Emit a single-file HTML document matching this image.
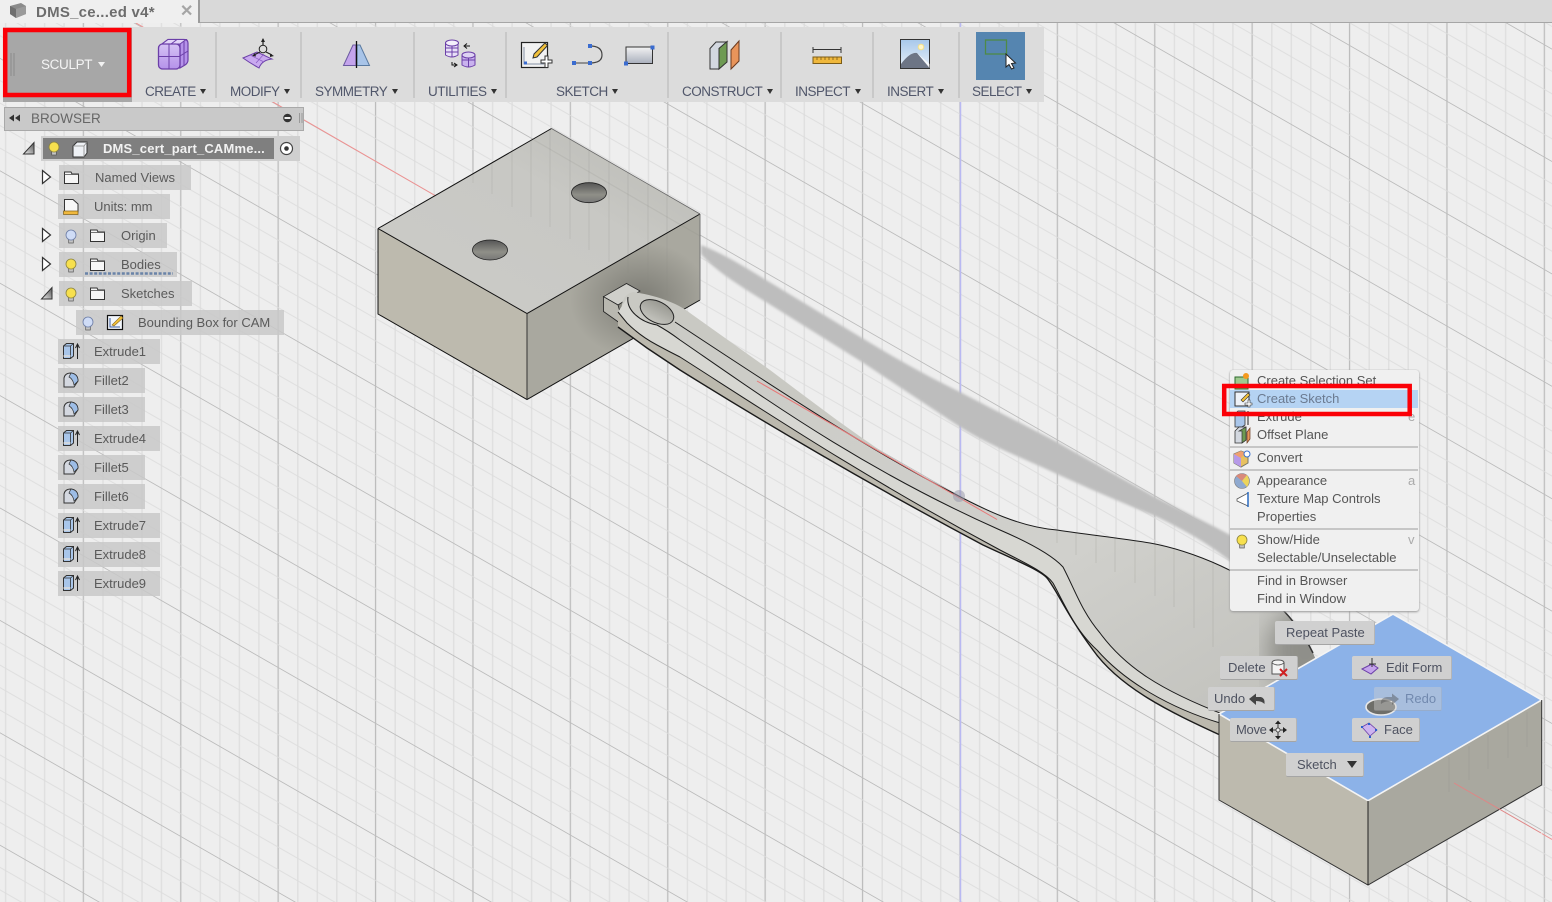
<!DOCTYPE html>
<html lang="en"><head><meta charset="utf-8"><title>DMS_cert_part</title>
<style>
html,body{margin:0;padding:0;width:1552px;height:902px;overflow:hidden;background:#eee;font-family:"Liberation Sans",Arial,sans-serif}
.a{position:absolute}
.t{position:absolute;white-space:nowrap;font-size:13px}
.lbl{position:absolute;top:84px;height:16px;line-height:16px;font-size:13.5px;color:#50566a;white-space:nowrap;letter-spacing:-.5px}
.lbl i{display:inline-block;width:0;height:0;border-left:3.5px solid transparent;border-right:3.5px solid transparent;border-top:5px solid #333;margin-left:4.5px;vertical-align:2px}
.sep{position:absolute;top:32px;width:2px;height:66px;background:#c8c8c8}
.row{position:absolute;height:25px;line-height:25px;background:rgba(200,200,200,.85);font-size:13px;color:#5a5a5a;white-space:nowrap}
.row span{position:absolute;top:0}
.mi{position:absolute;left:1257px;height:18px;line-height:20px;font-size:13px;color:#555;white-space:nowrap}
.ms{position:absolute;left:1230px;width:188px;height:2px;background:#c6c6c6}
.sc{position:absolute;left:1408px;height:18px;line-height:20px;font-size:13px;color:#aaa}
.b{position:absolute;height:23px;line-height:24px;background:#d0d0d0;border-bottom:1.5px solid #a5a5a5;border-right:1px solid #b5b5b5;border-radius:2px;font-size:13px;color:#4e5260;white-space:nowrap;box-sizing:content-box}
.b span{position:absolute;top:0}
</style></head><body>

<svg class="a" style="left:0;top:0" width="1552" height="902" viewBox="0 0 1552 902">
<defs>
<pattern id="gv" patternUnits="userSpaceOnUse" x="83.3" y="0" width="97.4" height="50">
<rect x="19" width="1.4" height="50" fill="#dfdfdf"/><rect x="38.5" width="1.4" height="50" fill="#dfdfdf"/><rect x="58" width="1.4" height="50" fill="#dfdfdf"/><rect x="77.5" width="1.4" height="50" fill="#dfdfdf"/><rect x="-.6" width="1.3" height="50" fill="#bdbdbd"/><rect x="96.8" width="1.3" height="50" fill="#bdbdbd"/>
</pattern>
<pattern id="gd" patternUnits="userSpaceOnUse" x="0" y="57.9" width="60" height="112.4" patternTransform="skewY(29.83)">
<rect y="22.2" width="60" height="1" fill="#dcdcdc"/><rect y="44.7" width="60" height="1" fill="#dcdcdc"/><rect y="67.2" width="60" height="1" fill="#dcdcdc"/><rect y="89.7" width="60" height="1" fill="#dcdcdc"/><rect y="0" width="60" height="1" fill="#bcbcbc"/>
</pattern>
<linearGradient id="top1" x1="0" y1="1" x2="1" y2="0"><stop offset="0" stop-color="#cbcbc8"/><stop offset=".6" stop-color="#c8c8c4"/><stop offset="1" stop-color="#b8b8b2"/></linearGradient>
<radialGradient id="dk" cx=".5" cy=".5" r=".5"><stop offset="0" stop-color="#55554f" stop-opacity=".55"/><stop offset="1" stop-color="#55554f" stop-opacity="0"/></radialGradient>
<linearGradient id="hole" x1="0" y1="0" x2="0" y2="1"><stop offset="0" stop-color="#555"/><stop offset=".6" stop-color="#8f8f88"/><stop offset="1" stop-color="#777"/></linearGradient>
<linearGradient id="hole2" x1="0" y1="0" x2="0" y2="1"><stop offset="0" stop-color="#999992"/><stop offset="1" stop-color="#c4c4be"/></linearGradient>
<linearGradient id="bowl" x1="0" y1="0" x2="1" y2="1"><stop offset="0" stop-color="#cbcbc6"/><stop offset=".6" stop-color="#d0d0cc"/><stop offset="1" stop-color="#c0c0bb"/></linearGradient>
<filter id="bl"><feGaussianBlur stdDeviation="1.2"/></filter>
<filter id="bl2"><feGaussianBlur stdDeviation="12"/></filter>
<clipPath id="bwc"><path d="M675,322 C760,378 860,445 953,493 C985,510 1020,527 1057,530 C1090,535 1120,538 1150,543 C1190,550 1255,575 1283,610 Q1302,630 1313,653 L1318,665 L1225,715 C1160,690 1125,667 1100,633 C1082,612 1075,590 1063,567 C1052,555 1030,543 1000,530 C860,468 760,395 680,340Z"/></clipPath>
<clipPath id="rfc"><polygon points="527,313.5 700,214 700,300 527,399.5"/></clipPath>
</defs>
<rect width="1552" height="902" fill="#eee"/>
<rect y="23" width="1552" height="879" fill="url(#gv)"/>
<rect y="23" width="1552" height="879" fill="url(#gd)"/>
<line x1="136" y1="23" x2="435" y2="195.5" stroke="#f09090" stroke-width="1"/>
<line x1="960.5" y1="23" x2="960.5" y2="902" stroke="#b9b9f2" stroke-width="1.5"/>

<!-- shadow -->
<path d="M701,245 C722,253 745,267 766,280 L862,338 C895,358 925,375 960,392 C990,408 1025,425 1057,442 C1090,461 1125,480 1155,497 C1185,512 1210,524 1230,535 C1255,550 1275,575 1290,600 L1270,600 C1258,585 1245,572 1230,561 C1205,541 1180,528 1155,516 C1120,502 1090,489 1057,474 C1025,459 990,446 960,427 L862,362 L766,302 C735,283 715,270 701,254 Z" fill="#bdbdbd" filter="url(#bl)"/>

<!-- block 1 -->
<polygon points="378,228.5 527,313.5 527,399.5 378,314" fill="#bdbaae"/>
<polygon points="527,313.5 700,214 700,300 527,399.5" fill="#a9a89f"/>
<ellipse cx="640" cy="300" rx="70" ry="58" fill="url(#dk)" clip-path="url(#rfc)"/>
<polygon points="551.5,128.5 700,214 527,313.5 378,228.5" fill="url(#top1)"/>
<g stroke="#8a8a85" stroke-opacity=".16" stroke-width="1.2" fill="none">
<path d="M473,174V183M492,163V194M512,152V207M531,140V217M550,130V227M570,139V239M589,150V250M609,162V262M628,173V273M648,184V285M667,195V296"/>
<path d="M534,140L700,236"/>
</g>
<g fill="none" stroke="#111" stroke-width="1">
<path d="M378,228.5L551.5,128.5"/>
<path d="M551.5,128.5L700,214" stroke="#666" stroke-width=".8"/>
<path d="M378,228.5L527,313.5L700,214"/>
<path d="M378,228.5V314L527,399.5L700,300"/>
<path d="M527,313.5V399.5" stroke="#333"/>
<path d="M700,214V300" stroke="#777"/>
</g>
<ellipse cx="589" cy="192.7" rx="17.5" ry="10" fill="url(#hole)" stroke="#222" stroke-width=".8"/>
<ellipse cx="490" cy="250" rx="17.5" ry="10" fill="url(#hole)" stroke="#222" stroke-width=".8"/>

<!-- spoon -->
<polygon points="603.5,296.7 626.5,283.5 640,291 618,305" fill="#cfcfca" stroke="#222" stroke-width=".8"/>
<polygon points="603.5,296.7 618,305 624,326 603.5,311.5" fill="#b9b8b0" stroke="#222" stroke-width=".8"/>
<!-- silhouette -->
<path d="M622,304 Q624,294 633,292 C660,296 680,305 690,313 L770,370 C830,415 890,462 953,493 C985,510 1020,527 1057,530 C1090,535 1120,538 1150,543 C1190,550 1255,575 1283,610 Q1302,630 1313,653 L1318,665 L1220,735 C1170,712 1120,688 1093,650 C1065,612 1058,592 1047,578 C1040,570 1015,560 983,545 C870,485 760,420 680,370 Q665,360 647,348 L618,327 Z" fill="#c9c9c3"/>
<!-- B-C light band -->
<path d="M628,297 C626,310 640,322 657,325 Q668,331 680,340 C760,395 860,468 1000,530 C1030,543 1052,555 1063,567 C1075,590 1082,612 1100,633 C1125,667 1160,690 1225,715 L1220,723 C1170,708 1125,682 1097,650 C1075,630 1065,605 1053,583 C1045,572 1025,563 1000,550 C860,475 760,408 680,357 Q668,351 657,345 Q640,336 627,323 L618,312 Z" fill="#d7d7d2"/>
<!-- C-D dark band -->
<path d="M618,312 L627,323 Q640,336 657,345 Q668,351 680,357 C760,408 860,475 1000,550 C1025,563 1045,572 1053,583 C1065,605 1075,630 1097,650 C1125,682 1170,708 1220,723 L1220,735 C1170,712 1120,688 1093,650 C1065,612 1058,592 1047,578 C1040,570 1015,560 983,545 C870,485 760,420 680,370 Q665,360 647,348 L618,327 Z" fill="#bcb9ae"/>
<!-- bowl + upper strip -->
<path d="M675,322 C760,378 860,445 953,493 C985,510 1020,527 1057,530 C1090,535 1120,538 1150,543 C1190,550 1255,575 1283,610 Q1302,630 1313,653 L1318,665 L1225,715 C1160,690 1125,667 1100,633 C1082,612 1075,590 1063,567 C1052,555 1030,543 1000,530 C860,468 760,395 680,340Z" fill="url(#bowl)"/>
<g clip-path="url(#bwc)"><ellipse cx="1305" cy="650" rx="38" ry="42" fill="#6d6d67" opacity=".6" filter="url(#bl2)"/></g>
<g stroke="#8a8a85" stroke-opacity=".18" stroke-width="1.2" fill="none">
<path d="M1057,530V543M1076,533V555M1096,536V563M1115,538V572M1135,541V583M1155,544V596M1174,549V607M1194,556V628M1213,562V647"/>
</g>
<g fill="none" stroke="#1a1a1a" stroke-width="1">
<path d="M675,322 C760,378 860,445 953,493 C985,510 1020,527 1057,530 C1090,535 1120,538 1150,543 C1190,550 1255,575 1283,610"/>
<path d="M628,297 C626,310 640,322 657,325 Q668,331 680,340 C760,395 860,468 1000,530 C1030,543 1052,555 1063,567 C1075,590 1082,612 1100,633 C1125,667 1160,690 1225,715"/>
<path d="M618,312 L627,323 Q640,336 657,345 Q668,351 680,357 C760,408 860,475 1000,550 C1025,563 1045,572 1053,583 C1065,605 1075,630 1097,650 C1125,682 1170,708 1220,723"/>
<path d="M618,327 L647,348 Q665,360 680,370 C760,420 870,485 983,545 C1015,560 1040,570 1047,578 C1058,592 1065,612 1093,650 C1120,688 1170,712 1220,735" stroke-width="1.4"/>
<path d="M1283,610 Q1302,630 1313,653" stroke="#333" stroke-width="1.5"/>
</g>
<ellipse cx="657" cy="312" rx="18" ry="10.5" transform="rotate(27 657 312)" fill="url(#hole2)" stroke="#222" stroke-width="1"/>
<line x1="757" y1="381" x2="997" y2="519.5" stroke="#e87878" stroke-width="1"/>
<circle cx="959" cy="496" r="6" fill="#9b9bad" opacity=".55"/>

<!-- block 2 -->
<polygon points="1219,714 1368,800.7 1368,885 1219,800" fill="#bdbaae"/>
<polygon points="1368,800.7 1541.7,700 1541.7,785 1368,885" fill="#a9a89f"/>
<polygon points="1393,614 1541.7,700 1368,800.7 1219,714" fill="#8cb2e8" stroke="#f4f4f4" stroke-width="1.6"/>
<g fill="none" stroke="#222" stroke-width="1">
<path d="M1219,714V800L1368,885L1541.7,785V700" stroke="#333"/>
<path d="M1368,801V885"/>
</g>
<g stroke="#8a8a85" stroke-opacity=".16" stroke-width="1.2" fill="none"><path d="M1449,757V792M1469,746V780M1488,735V769M1508,723V758M1527,712V747"/></g>
<line x1="1454" y1="783" x2="1541" y2="833" stroke="#e08585" stroke-width="1"/>
<line x1="1541.7" y1="833.500" x2="1552" y2="839.500" stroke="#f09090" stroke-width="1"/>
<ellipse cx="1381" cy="707" rx="15" ry="8" fill="#6e6e69" stroke="#e9e9e9" stroke-width="1.6"/>
</svg>

<!-- tab bar -->
<div class="a" style="left:0;top:0;width:1552px;height:22px;background:#d9d9d9;border-bottom:1px solid #a6a6a6"></div>
<div class="a" style="left:0;top:0;width:198px;height:23px;background:#efefef;border-right:2px solid #9c9c9c"></div>
<div class="t" style="left:36px;top:4px;font-size:15px;font-weight:bold;color:#6d6d6d;letter-spacing:.25px;line-height:18px">DMS_ce...ed v4*</div>
<div class="t" style="left:180px;top:3px;font-size:16px;font-weight:bold;color:#a5a5a5;line-height:18px">✕</div>

<!-- toolbar -->
<div class="a" style="left:3px;top:27px;width:1041px;height:75px;background:#dcdcdc"></div>
<div class="a" style="left:3px;top:28px;width:129px;height:74px;background:#a7a7a7"></div>
<div class="t" style="left:41px;top:57px;line-height:16px;font-size:13.5px;color:#f4f4f4;letter-spacing:-.35px">SCULPT</div>
<div class="sep" style="left:215px"></div><div class="sep" style="left:300px"></div><div class="sep" style="left:413px"></div><div class="sep" style="left:505px"></div><div class="sep" style="left:667px"></div><div class="sep" style="left:780px"></div><div class="sep" style="left:872px"></div><div class="sep" style="left:958px"></div>
<div class="lbl" style="left:145px">CREATE<i></i></div>
<div class="lbl" style="left:230px">MODIFY<i></i></div>
<div class="lbl" style="left:315px">SYMMETRY<i></i></div>
<div class="lbl" style="left:428px">UTILITIES<i></i></div>
<div class="lbl" style="left:556px">SKETCH<i></i></div>
<div class="lbl" style="left:682px">CONSTRUCT<i></i></div>
<div class="lbl" style="left:795px">INSPECT<i></i></div>
<div class="lbl" style="left:887px">INSERT<i></i></div>
<div class="lbl" style="left:972px">SELECT<i></i></div>
<div class="a" style="left:976px;top:32px;width:49px;height:48px;background:#5585b0"></div>

<!-- browser -->
<div class="a" style="left:4px;top:107px;width:298px;height:22px;background:#c9c9c9;border:1px solid #a9a9a9"></div>
<div class="t" style="left:31px;top:110px;font-size:13.5px;line-height:18px;color:#666">BROWSER</div>
<div class="a" style="left:41px;top:136px;width:259px;height:25px;background:#cfcfcf"></div>
<div class="a" style="left:43px;top:138px;width:231px;height:21px;background:#7f7f7f"></div>
<div class="t" style="left:103px;top:140px;line-height:17px;font-weight:bold;font-size:13px;color:#f2f2f2;letter-spacing:.17px">DMS_cert_part_CAMme...</div>

<div class="row" style="left:59px;top:165px;width:132px"><span style="left:36px">Named Views</span></div>
<div class="row" style="left:58px;top:194px;width:112px"><span style="left:36px">Units: mm</span></div>
<div class="row" style="left:59px;top:223px;width:108px"><span style="left:62px">Origin</span></div>
<div class="row" style="left:59px;top:252px;width:118px"><span style="left:62px">Bodies</span></div>
<div class="row" style="left:59px;top:281px;width:133px"><span style="left:62px">Sketches</span></div>
<div class="row" style="left:76px;top:310px;width:208px"><span style="left:62px">Bounding Box for CAM</span></div>
<div class="row" style="left:58px;top:339px;width:102px"><span style="left:36px">Extrude1</span></div>
<div class="row" style="left:58px;top:368px;width:87px"><span style="left:36px">Fillet2</span></div>
<div class="row" style="left:58px;top:397px;width:87px"><span style="left:36px">Fillet3</span></div>
<div class="row" style="left:58px;top:426px;width:102px"><span style="left:36px">Extrude4</span></div>
<div class="row" style="left:58px;top:455px;width:87px"><span style="left:36px">Fillet5</span></div>
<div class="row" style="left:58px;top:484px;width:87px"><span style="left:36px">Fillet6</span></div>
<div class="row" style="left:58px;top:513px;width:102px"><span style="left:36px">Extrude7</span></div>
<div class="row" style="left:58px;top:542px;width:102px"><span style="left:36px">Extrude8</span></div>
<div class="row" style="left:58px;top:571px;width:102px"><span style="left:36px">Extrude9</span></div>

<!-- context menu -->
<div class="a" style="left:1230px;top:370px;width:189px;height:241px;background:#f0f0f0;border-radius:3px;box-shadow:0 1px 2px #999,0 0 1px #bbb"></div>
<div class="a" style="left:1230px;top:390px;width:188px;height:18px;background:#b5d3f3"></div>
<div class="mi" style="top:371px">Create Selection Set</div>
<div class="mi" style="top:389px;color:#6b7a90">Create Sketch</div>
<div class="mi" style="top:407px">Extrude</div>
<div class="mi" style="top:425px">Offset Plane</div>
<div class="ms" style="top:446px"></div>
<div class="mi" style="top:448px">Convert</div>
<div class="ms" style="top:469px"></div>
<div class="mi" style="top:471px">Appearance</div>
<div class="mi" style="top:489px">Texture Map Controls</div>
<div class="mi" style="top:507px">Properties</div>
<div class="ms" style="top:528px"></div>
<div class="mi" style="top:530px">Show/Hide</div>
<div class="mi" style="top:548px">Selectable/Unselectable</div>
<div class="ms" style="top:569px"></div>
<div class="mi" style="top:571px">Find in Browser</div>
<div class="mi" style="top:589px">Find in Window</div>
<div class="sc" style="top:407px">e</div><div class="sc" style="top:471px">a</div><div class="sc" style="top:530px">v</div>

<!-- marking menu -->
<div class="b" style="left:1275px;top:621px;width:99px"><span style="left:11px">Repeat Paste</span></div>
<div class="b" style="left:1220px;top:656px;width:77px"><span style="left:8px">Delete</span></div>
<div class="b" style="left:1352px;top:656px;width:99px"><span style="left:34px">Edit Form</span></div>
<div class="b" style="left:1208px;top:687px;width:66px"><span style="left:6px">Undo</span></div>
<div class="b" style="left:1374px;top:687px;width:67px;opacity:.42"><span style="left:31px">Redo</span></div>
<div class="b" style="left:1230px;top:718px;width:66px"><span style="left:6px;letter-spacing:-.3px">Move</span></div>
<div class="b" style="left:1352px;top:718px;width:67px"><span style="left:32px">Face</span></div>
<div class="b" style="left:1286px;top:753px;width:77px"><span style="left:11px">Sketch</span></div>

<!-- icons overlay -->
<svg class="a" style="left:0;top:0;pointer-events:none" width="1552" height="902" viewBox="0 0 1552 902">
<defs>
<g id="bY"><rect x="-2.300" y="3" width="4.600" height="4" fill="#c4c4c4" stroke="#555" stroke-width=".7"/><circle cx="0" cy="-1" r="5" fill="#f7e04e" stroke="#8b8340" stroke-width=".8"/></g>
<g id="bB"><rect x="-2.300" y="3" width="4.600" height="4" fill="#c4c4c4" stroke="#555" stroke-width=".7"/><circle cx="0" cy="-1" r="5" fill="#cfdcf6" stroke="#6b7ca5" stroke-width=".8"/></g>
<g id="fo"><path d="M.5,1H7L8,3H14.500V12.500H.5Z" fill="#f6f6f6" stroke="#333" stroke-width="1"/><path d="M.5,3.500H14.500" stroke="#555" stroke-width=".8"/></g>
<g id="ex"><path d="M1,3L4,.5H11V13L8,15.500H1Z" fill="#a9c6ea" stroke="#333" stroke-width="1"/><path d="M1,3H8V15.500M8,3L11,.5" fill="none" stroke="#333" stroke-width=".8"/><path d="M1,13H8" stroke="#ddd" stroke-width="1.500"/><path d="M15,16V2M13,5L15,1L17,5" fill="none" stroke="#222" stroke-width="1"/></g>
<g id="fi"><path d="M1,15V6Q2,1 8,1Q15,2 15,9L11,15Z" fill="#d4d8e0" stroke="#333" stroke-width="1"/><path d="M8,1Q15,2 15,9L11,13Q10,7 6,5Z" fill="#9dbde6" stroke="#333" stroke-width=".7"/></g>
<path id="tO" d="M.5,.5L8.500,7L.5,13.500Z" fill="#fff" stroke="#333" stroke-width="1.200"/>
<linearGradient id="tfg" x1="0" y1="1" x2="1" y2="0"><stop offset="0" stop-color="#eee"/><stop offset="1" stop-color="#555"/></linearGradient>
<g id="tF"><path d="M11,.5V12H.5Z" fill="url(#tfg)" stroke="#333" stroke-width="1"/></g>
<linearGradient id="pf" x1="0" y1="0" x2="0" y2="1"><stop offset="0" stop-color="#d5c2f4"/><stop offset="1" stop-color="#b592ea"/></linearGradient>
</defs>

<!-- tab cube -->
<path d="M10,6L21,3L26,6V14L16,18L10,14Z" fill="#8b8b8b"/><path d="M10,6L16,9V18L10,14Z" fill="#6f6f6f"/><path d="M16,9L26,6V14L16,18Z" fill="#9a9a9a"/>

<!-- sculpt grip + arrow -->
<path d="M11,53V76M14,53V76" stroke="#8b8b8b" stroke-width="1"/>
<path d="M98,62H105L101.500,67Z" fill="#f2f2f2"/>

<!-- CREATE -->
<path d="M162,44L168,39.500H184Q188,39.500 188,43V60Q188,63 185,65L180,68V44Z" fill="#b592ea" stroke="#6b3fa8" stroke-width="1.200"/>
<path d="M162,44L168,39.500H186L180,44Z" fill="#e2d5f8" stroke="#6b3fa8" stroke-width="1"/>
<rect x="158.500" y="44" width="21.500" height="25" rx="4" fill="url(#pf)" stroke="#6b3fa8" stroke-width="1.300"/>
<path d="M169,44V69M158.500,56.500H180M180,56L188,51M184,41V66M171,44L177,39.500" fill="none" stroke="#6b3fa8" stroke-width="1"/>
<!-- MODIFY -->
<path d="M243,58L257,52L272,59Q262,60 259,68Q250,63 243,58Z" fill="#c9a9ef" stroke="#6b3fa8" stroke-width="1"/>
<path d="M250,55L264,62M256,63L264,54" stroke="#8a5cc4" stroke-width=".7" fill="none"/>
<circle cx="263" cy="49" r="3.800" fill="#ddd" stroke="#222" stroke-width="1"/><path d="M263,39V45M260,52L254,55M266,52L272,55" stroke="#222" stroke-width="1.200"/><path d="M261,42L263,38L265,42ZM255,53L252,56L256,56.500ZM270,53.500L274,56L270,57Z" fill="#222"/>
<!-- SYMMETRY -->
<path d="M343.500,65.500L353,45H356V65.500Z" fill="#c4a4ec" stroke="#6b5aa0"/><path d="M357,45H360L369.500,65.500H357Z" fill="#a8c4e8" stroke="#5a7aa0"/><path d="M356.500,41V68" stroke="#111" stroke-width="1.300"/>
<!-- UTILITIES -->
<g fill="#e8e0f8" stroke="#6b3fa8" stroke-width="1"><path d="M445.500,43V55Q452,59 458,55V43Z"/><ellipse cx="452" cy="43" rx="6.500" ry="3" fill="#f4f0fb"/><path d="M445.500,48H458M445.500,52H458M452,46V57" fill="none"/><path d="M462,55V65Q468.500,69 475,65V55Z" fill="#c9b2ee"/><ellipse cx="468.500" cy="55" rx="6.500" ry="3" fill="#ddd2f3"/><path d="M462,60H475M468.500,58V67" fill="none"/></g>
<path d="M470,46H465M467,43.500L464,46L467,48.500M452,62V65H456M454,63L457,65L454,67" fill="none" stroke="#111" stroke-width="1"/>
<!-- SKETCH icons -->
<rect x="521.500" y="42.500" width="26" height="25" fill="#f2f2f2" stroke="#222" stroke-width="1.200"/>
<path d="M524,47V64H544" fill="none" stroke="#8793a5" stroke-width="1"/>
<rect x="524" y="61.500" width="3" height="3" fill="#3a6cd0"/>
<path d="M534,54L545,43L547.500,45.500L537,57L533,58Z" fill="#f2c13a" stroke="#333" stroke-width="1"/>
<path d="M541,60H545V56H548V60H552V63H548V67.500H545V63H541Z" fill="#fff" stroke="#333" stroke-width="1"/>
<path d="M574,63H590" stroke="#444" stroke-width="1"/><path d="M590,46Q602,46 602,55Q602,63 590,63" fill="none" stroke="#444" stroke-width="1.200"/>
<rect x="572" y="61" width="4" height="4" fill="#3a6cd0"/><rect x="588" y="61" width="4" height="4" fill="#3a6cd0"/><rect x="588" y="44" width="4" height="4" fill="#3a6cd0"/>
<defs><linearGradient id="rg" x1="0" y1="0" x2="0" y2="1"><stop offset="0" stop-color="#f3f3f3"/><stop offset="1" stop-color="#a9afbc"/></linearGradient></defs>
<rect x="626" y="47" width="26.500" height="16.500" fill="url(#rg)" stroke="#333" stroke-width="1"/>
<rect x="624" y="61.500" width="4" height="4" fill="#3a6cd0"/><rect x="650.500" y="45.500" width="4" height="4" fill="#3a6cd0"/>
<!-- CONSTRUCT -->
<path d="M710,48.500L716,42H727V42L719,48.500V69H710Z" fill="#d3d8e0" stroke="#333" stroke-width="1"/><path d="M719,48.500L727,41.500V62L719,69Z" fill="#6e9a52" stroke="#333" stroke-width="1"/>
<path d="M731,50L739,41V61L731,69Z" fill="#e8945a" stroke="#6a3a20" stroke-width="1"/>
<!-- INSPECT -->
<path d="M813,49.500H841M813,47V53M841,47V53" stroke="#333" stroke-width="1" fill="none"/>
<rect x="813" y="57" width="28.500" height="6.500" fill="#f0b83c" stroke="#7b5c18" stroke-width="1"/>
<path d="M817,57V60M821,57V60M825,57V60M829,57V60M833,57V60M837,57V60" stroke="#7b5c18" stroke-width=".8"/>
<!-- INSERT -->
<defs><linearGradient id="sky" x1="0" y1="0" x2="0" y2="1"><stop offset="0" stop-color="#a8c8ea"/><stop offset="1" stop-color="#e8f0f8"/></linearGradient></defs>
<rect x="900.500" y="39.500" width="29" height="29" fill="url(#sky)" stroke="#333" stroke-width="1"/>
<path d="M901,64Q910,52 917,53L929.500,67V68H901Z" fill="#6d7585"/><path d="M917,53L929.500,64V68Z" fill="#fff" opacity=".8"/><circle cx="921" cy="47" r="2.800" fill="#fff6c8" stroke="#f3e08a"/>
<!-- SELECT -->
<rect x="985.500" y="40" width="21" height="14" fill="none" stroke="#4e8a46" stroke-width="1.300"/>
<path d="M1006,54V67L1009,64.500L1011.500,69L1014,68L1011.500,63.500L1015.500,63Z" fill="#fff" stroke="#222" stroke-width="1"/>

<!-- browser header -->
<path d="M9,118L14,114.500V121.500ZM15,118L20,114.500V121.500Z" fill="#333"/>
<circle cx="287.500" cy="118" r="4.300" fill="#333"/><rect x="284.500" y="117" width="6" height="2" fill="#eee"/>
<path d="M299.500,113V123M302,113V123" stroke="#999" stroke-width="1"/>
<!-- root row -->
<use href="#tF" x="23" y="142"/>
<use href="#bY" x="54" y="148"/>
<path d="M73,146L77,142H87V153L84,157H73Z" fill="#eef1f5" stroke="#333" stroke-width="1"/><path d="M73,146H84V157M84,146L87,142" fill="none" stroke="#888" stroke-width=".8"/>
<circle cx="286.500" cy="148.500" r="6" fill="#fff" stroke="#444" stroke-width="1.200"/><circle cx="286.500" cy="148.500" r="2.300" fill="#333"/>
<!-- tree icons -->
<use href="#tO" x="42" y="170"/>
<use href="#fo" x="64" y="171"/>
<path d="M64.500,199.500H73L78,204V212H64.500Z" fill="#f7f7f7" stroke="#333" stroke-width="1"/><rect x="63.500" y="211" width="14.500" height="3.500" fill="#f0b83c" stroke="#7b5c18" stroke-width=".7"/>
<use href="#tO" x="42" y="228"/><use href="#bB" x="71" y="236"/><use href="#fo" x="90" y="229"/>
<use href="#tO" x="42" y="257"/><use href="#bY" x="71" y="265"/><use href="#fo" x="90" y="258"/>
<path d="M85,273.500H173" stroke="#6a84a8" stroke-width="2.500" stroke-dasharray="3 1.600"/>
<use href="#tF" x="41" y="287"/><use href="#bY" x="71" y="294"/><use href="#fo" x="90" y="287"/>
<use href="#bB" x="88" y="323"/>
<rect x="107.500" y="315.500" width="15" height="14" fill="#f2f6fb" stroke="#111" stroke-width="1.200"/><path d="M110,318V327H120" fill="none" stroke="#3a5ca0"/><path d="M112,325L121,316L123,318L114,326Z" fill="#f2c13a" stroke="#8b6a20" stroke-width=".6"/>
<use href="#ex" x="62.500" y="343"/><use href="#fi" x="63" y="372"/><use href="#fi" x="63" y="401"/><use href="#ex" x="62.500" y="430"/><use href="#fi" x="63" y="459"/><use href="#fi" x="63" y="488"/><use href="#ex" x="62.500" y="517"/><use href="#ex" x="62.500" y="546"/><use href="#ex" x="62.500" y="575"/>

<!-- menu icons -->
<rect x="1235" y="377" width="13" height="12" fill="#9fca8f" stroke="#2c6a2c"/><circle cx="1246" cy="376" r="3" fill="#f59a1e"/>
<rect x="1235" y="392" width="14" height="14" fill="#eef2f8" stroke="#333" stroke-width="1"/><path d="M1241,400L1248,393L1250,395L1243,402Z" fill="#f2c13a" stroke="#333" stroke-width=".6"/><path d="M1245,403H1248V400H1250V403H1252V405H1250V407H1248V405H1245Z" fill="#fff" stroke="#333" stroke-width=".6"/>
<path d="M1235,414L1238,411H1245V425L1242,427H1235Z" fill="#a9c6ea" stroke="#333" stroke-width=".8"/><path d="M1248,425V411" stroke="#222"/>
<path d="M1235,431L1239,427H1246V440L1242,443H1235Z" fill="#d3d8e0" stroke="#333" stroke-width=".8"/><path d="M1239,431L1246,427V440L1242,443V431Z" fill="#6e9a52" stroke="#333" stroke-width=".7"/><path d="M1247,432L1250,428V439L1247,443Z" fill="#e8945a" stroke="#6a3a20" stroke-width=".7"/>
<path d="M1234,454L1241,451L1248,454V463L1241,467L1234,463Z" fill="#e8c160" stroke="#776"/><path d="M1234,454L1241,458V467L1234,463Z" fill="#b79ae8"/><path d="M1234,454L1241,451L1245,453L1241,458Z" fill="#f0a070"/><circle cx="1247" cy="454" r="3" fill="#fff" stroke="#3a70d0"/>
<circle cx="1242" cy="481" r="7.500" fill="#8fa9cf" stroke="#777" stroke-width=".6"/><path d="M1242,481L1236,476Q1240,472 1247,475Z" fill="#d98a7a"/><path d="M1242,481L1247,475Q1251,481 1247,487Z" fill="#ecd45a"/>
<path d="M1237,499L1248,493V506L1237,501Z" fill="#fff" stroke="#555" stroke-width=".8"/><path d="M1248,492V507" stroke="#2a6bc0" stroke-width="1.500"/>
<use href="#bY" x="1242" y="541"/>

<!-- marking icons -->
<path d="M1272,663Q1272,660 1278,660Q1284,660 1284,663V674H1272Z" fill="#f3f3f3" stroke="#555" stroke-width="1"/><path d="M1272,663Q1278,667 1284,663" fill="none" stroke="#555" stroke-width=".8"/><path d="M1280,669L1287,676M1287,669L1280,676" stroke="#d02020" stroke-width="2"/>
<path d="M1362,669L1372,664L1378,668L1371,674Z" fill="#c4a4ec" stroke="#6b3fa8" stroke-width="1"/><path d="M1372,658V667M1369,664H1376" stroke="#333" stroke-width="1"/>
<path d="M1249,699L1256,693.500V697H1261Q1265,698 1264.500,704Q1262,701 1256,701V705Z" fill="#444"/>
<g opacity=".42"><path d="M1399,699L1392,693.500V697H1387Q1380,698 1381,704Q1384,701 1392,701V705Z" fill="#4a4a4a"/></g>
<path d="M1278,722V738M1270,730H1286" stroke="#333" stroke-width="1"/><path d="M1278,720.500L1275,724H1281ZM1278,739.500L1275,736H1281ZM1269,730L1273,727V733ZM1287,730L1283,727V733Z" fill="#222"/><circle cx="1278" cy="730" r="2" fill="#eee" stroke="#333" stroke-width=".8"/>
<path d="M1362,727L1369,723L1377,730L1370,736Z" fill="#cdb4ef" stroke="#6b3fa8" stroke-width=".8"/><path d="M1361,727H1363M1369,723V725M1370,736V738M1377,730H1375" stroke="#2a5fd0" stroke-width="2"/>
<path d="M1347,761H1357L1352,768Z" fill="#333"/>

<!-- red highlight boxes -->
<rect x="5.200" y="30" width="124" height="65" fill="none" stroke="#fb0007" stroke-width="4.500"/>
<rect x="1224.200" y="386" width="185.500" height="28" fill="none" stroke="#fb0007" stroke-width="4.500"/>
</svg>
</body></html>
